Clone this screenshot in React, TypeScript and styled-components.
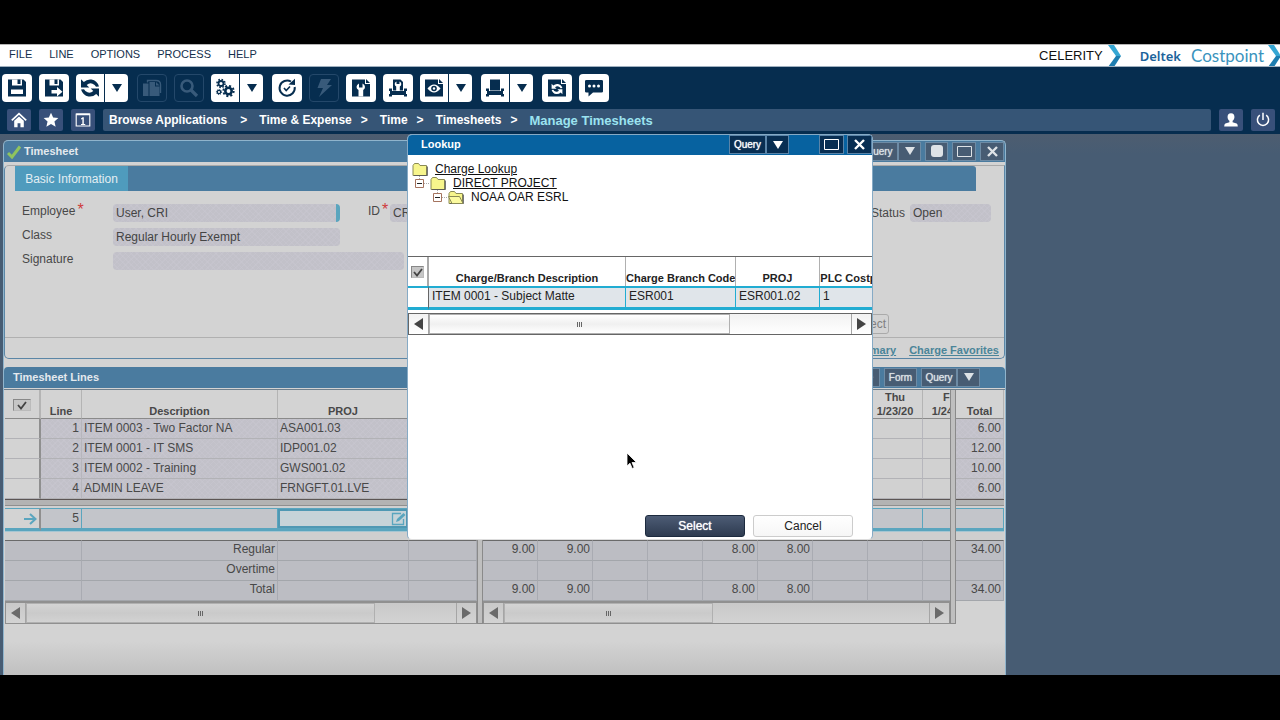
import React from 'react';
import styled, { createGlobalStyle, css } from 'styled-components';

const GlobalStyle = createGlobalStyle`
  * { box-sizing: border-box; }
  body { margin: 0; background: #000; font-family: "Liberation Sans", Arial, sans-serif; font-size: 12px; }
  button, input { font-family: inherit; font-size: inherit; }
  svg { display: block; flex: none; }
`;

const navy = '#062d4f';
const steel = '#4a7b9f';
const slate = '#475c73';
const cyan = '#5aa5be';

/* ---------- shell ---------- */

const Page = styled.div`
  display: flex;
  flex-direction: column;
  min-height: 100vh;
  padding: 44px 0 45px;
  background: #000;
`;

const MenuBar = styled.header`
  display: flex;
  justify-content: space-between;
  align-items: stretch;
  height: 23px;
  overflow: hidden;
  background: #fff;
  border-top: 1px solid #b5b5b5;
  border-bottom: 1px solid #9fb0bf;
`;

const Menus = styled.nav`
  display: flex;
  gap: 17px;
  padding-left: 9px;
  line-height: 18px;
  font-size: 11px;
  a { color: #14304c; text-decoration: none; }
`;

const Brand = styled.div`
  display: flex;
  align-items: center;
  margin-right: -2px;
  line-height: 20px;
`;

const Company = styled.span`
  margin-right: 5px;
  font-size: 13px;
  color: #111;
`;

const Vendor = styled.span`
  margin-left: 18px;
  margin-right: 10px;
  font-family: "Noto Sans", sans-serif;
  font-size: 13px;
  font-weight: 600;
  color: #1c639b;
`;

const Product = styled.span`
  margin-right: 4px;
  font-family: Lato, sans-serif;
  font-size: 17px;
  font-weight: 400;
  color: #3a93bd;
`;

const Header = styled.div`
  background: ${navy};
  padding: 7px 0 3px;
`;

const Toolbar = styled.div`
  display: flex;
  gap: 7px;
  padding-left: 2px;
  height: 28px;
`;

const ToolButton = styled.button`
  display: flex;
  align-items: center;
  justify-content: center;
  width: 30px;
  height: 28px;
  padding: 0;
  border: 0;
  border-radius: 4px;
  color: ${navy};
  background: #fff;
  &:disabled { color: #385a7a; background: none; border: 1px solid #24486a; }
`;

const SplitButton = styled.div`
  display: flex;
  margin-right: 2px;
  ${ToolButton}:first-child { width: 28px; border-radius: 4px 0 0 4px; }
  ${ToolButton}:last-child { width: 24px; border-radius: 0 4px 4px 0; border-left: 1px solid ${navy}; }
`;

const NavRow = styled.div`
  display: flex;
  gap: 8px;
  margin-top: 7px;
  padding: 0 5px 0 7px;
`;

const NavButton = styled.button`
  display: flex;
  align-items: center;
  justify-content: center;
  width: 24px;
  height: 22px;
  padding: 0;
  border: 0;
  border-radius: 2px;
  color: #fff;
  background: #38507a;
`;

const Crumbs = styled.nav`
  display: flex;
  flex: 1;
  align-items: center;
  padding-left: 6px;
  border-radius: 2px;
  background: #365576;
  font-weight: bold;
  color: #fff;
  a { color: inherit; text-decoration: none; }
  span { padding: 0 12px 0 9px; }
  a:first-child { padding-right: 4px; }
  a:last-child { color: #9be3f0; font-size: 13px; }
`;

/* ---------- workspace ---------- */

const Workspace = styled.main`
  position: relative;
  display: flex;
  flex: 1;
  padding: 6px 274px 0 3px;
  background: linear-gradient(#4d5d70, ${slate} 20px);
`;

const Window = styled.section`
  display: flex;
  flex-direction: column;
  flex: 1;
  min-width: 0;
  border: 1px solid #8fb4cc;
  border-bottom: 0;
  border-radius: 5px 5px 0 0;
  overflow: hidden;
  background: linear-gradient(#d3d3d3 0 500px, #c0c0c0 534px);
`;

const TitleBar = styled.div<{ $pad: number }>`
  display: flex;
  align-items: center;
  height: 21px;
  padding: 0 ${p => p.$pad}px 0 3px;
  background: ${steel};
  color: #e4e9ee;
  font-size: 11px;
`;

const Title = styled.h2<{ $indent: number }>`
  flex: 1;
  margin: 0;
  padding: 0 0 2px ${p => p.$indent}px;
  font-size: 11px;
  font-weight: bold;
`;

const BarButton = styled.button<{ $w: number; $gap?: number; $dark?: boolean }>`
  display: flex;
  align-items: center;
  justify-content: center;
  width: ${p => p.$w}px;
  height: 19px;
  margin-left: ${p => p.$gap || 0}px;
  margin-bottom: 1px;
  padding: 0;
  border: 1px solid ${p => (p.$dark ? '#5a84a8' : '#6d8ba5')};
  background: ${p => (p.$dark ? '#082e52' : slate)};
  color: ${p => (p.$dark ? '#fff' : '#dde2e6')};
  font-size: 10px;
  text-shadow: 0 0 1px currentColor;
`;

const FormPanel = styled.div`
  margin-top: 3px;
  border: 1px solid #5b86a6;
  border-top-color: #a9a9a9;
  border-radius: 5px;
  border-top-right-radius: 0;
`;

const TabStrip = styled.div`
  margin: 0 28px 0 10px;
  background: ${steel};
  border-radius: 0 3px 0 0;
`;

const Tab = styled.button`
  display: block;
  height: 25px;
  width: 113px;
  padding: 1px 0 0;
  border: 0;
  background: #4f9bbd;
  color: #e2eef3;
`;

const FormRows = styled.div`
  display: flex;
  flex-direction: column;
  padding: 8px 13px 0 17px;
  color: #484848;
`;

const FormRow = styled.div`
  display: flex;
  height: 24px;
`;

const Label = styled.label<{ $w: number; $end?: boolean }>`
  display: flex;
  width: ${p => p.$w}px;
  line-height: 24px;
  ${p => p.$end && css`margin-left: auto; padding-top: 2px;`}
`;

const IdText = styled.span`
  padding-left: 28px;
`;

const Required = styled.sup`
  margin-left: 2px;
  color: #cf3b3b;
  font-size: 16px;
  line-height: 22px;
`;

const hatch = css`
  background:
    repeating-linear-gradient(45deg, #cac8d266 0 1px, transparent 1px 4px),
    repeating-linear-gradient(-45deg, #cac8d266 0 1px, transparent 1px 4px),
    #c2c1c9;
`;

const Field = styled.input<{ $w: number; $mark?: boolean }>`
  ${hatch}
  width: ${p => p.$w}px;
  height: 18px;
  margin-top: 5px;
  padding: 0 3px;
  border: 0;
  border-right: ${p => (p.$mark ? `4px solid ${cyan}` : 0)};
  border-radius: 4px;
  color: #444;
`;

const SmallButton = styled.button`
  align-self: flex-end;
  margin: 43px 102px 3px 0;
  height: 20px;
  width: 48px;
  padding: 0 2px;
  text-align: right;
  border: 1px solid #aaa;
  border-radius: 3px;
  background: #d3d3d3;
  color: #808080;
`;

const PanelLinks = styled.div`
  display: flex;
  justify-content: flex-end;
  gap: 13px;
  height: 21px;
  padding: 4px 5px 0;
  border-top: 1px solid #b0b0b0;
  font-size: 11px;
  font-weight: bold;
  line-height: 16px;
  a { color: #4b8599; }
`;

const LinesBar = styled(TitleBar)`
  margin-top: 8px;
  border-radius: 4px 4px 0 0;
`;

/* ---------- line grid ---------- */

const Panes = styled.div`
  display: flex;
  align-items: flex-start;
  margin-top: 1px;
  padding: 0 1px;
  border-top: 1px solid #6f7f8c;
  color: #484848;
`;

const Pane = styled.div<{ $w?: number }>`
  ${p => (p.$w ? css`width: ${p.$w}px; flex: none;` : css`flex: 1; min-width: 0;`)}
  overflow: hidden;
`;

const Divider = styled.div`
  flex: none;
  width: 6px;
  height: 234px;
  border: 1px solid #8a8a8a;
  border-top: 0;
  background: #bfbfbf;
`;

const Grid = styled.table`
  table-layout: fixed;
  width: 100%;
  border-collapse: separate;
  border-spacing: 0;
  th, td { padding: 0 2px; overflow: hidden; white-space: nowrap; }
`;

const WideGrid = styled(Grid)`
  width: 495px;
`;

const HeadRow = styled.tr`
  height: 29px;
  th {
    vertical-align: bottom;
    font-size: 11px;
    line-height: 14px;
    border-right: 1px solid #b4b4b4;
    border-bottom: 1px solid #8a8a8a;
  }
  th.check { padding-bottom: 5px; border-right-width: 2px; }
`;

const Row = styled.tr<{ $plain?: boolean }>`
  height: 20px;
  td {
    ${p => (p.$plain ? 'background: #d1d1d1;' : hatch)}
    border-right: 1px solid #b6b6bc;
    border-bottom: 1px solid #b2b2b6;
    line-height: 19px;
  }
  td.mark { background: #d3d3d3; border-right: 2px solid #8f8f8f; }
`;

const GapRow = styled.tr<{ $split?: boolean }>`
  height: 9px;
  td {
    background: ${p =>
      p.$split
        ? 'linear-gradient(#5c5554 0 1px, #b3b3b3 1px 6px, #8f8f8f 6px 7px, #d0d0d0 7px)'
        : 'linear-gradient(#a5c6d2 0 1px, #cfcfcf 1px)'};
  }
`;

const CurrentRow = styled.tr`
  height: 23px;
  td {
    background: #c3c5ca;
    border-top: 1px solid ${cyan};
    border-bottom: 3px solid ${cyan};
    border-right: 1px solid ${cyan};
    line-height: 19px;
  }
  td.mark { background: #d3d3d3; border-right: 2px solid #8f8f8f; }
  td.edit { padding: 0; }
`;

const TotalRow = styled.tr<{ $first?: boolean }>`
  height: ${p => (p.$first ? 21 : 20)}px;
  td {
    background: #bcbdc3;
    border-right: 1px solid #a9abb2;
    border-bottom: 1px solid #a3a6ab;
    ${p => p.$first && 'border-top: 1px solid #6a6a6a;'}
    line-height: 17px;
    vertical-align: top;
    text-align: right;
  }
`;

const Num = styled.td`
  text-align: right;
`;

const CellEditor = styled.div`
  display: flex;
  align-items: center;
  height: 19px;
  border: 2px solid #4f98b3;
  background: #c6d3d8;
  input { flex: 1; min-width: 0; height: 15px; border: 0; padding: 0 2px; background: none; }
`;

const CheckBox = styled.span<{ $w: number }>`
  display: inline-grid;
  place-items: center;
  width: ${p => p.$w}px;
  height: 12px;
  border: 1px solid #888;
  border-right-color: #bbb;
  border-bottom-color: #bbb;
  background: #c6c6c6;
  input, svg { grid-area: 1 / 1; }
  input { appearance: none; margin: 0; width: 10px; height: 10px; }
  svg { pointer-events: none; }
`;

const ScrollTrack = styled.div<{ $light?: boolean }>`
  display: flex;
  height: ${p => (p.$light ? 22 : 23)}px;
  border: 1px solid ${p => (p.$light ? '#666' : '#909090')};
  border-top-width: ${p => (p.$light ? 1 : 2)}px;
  background: ${p => (p.$light ? 'linear-gradient(#f2f2f2, #fff)' : 'linear-gradient(#c9c9c9, #d3d3d3)')};
  color: ${p => (p.$light ? '#444' : '#6a6a6a')};
`;

const ScrollArrow = styled.button`
  display: flex;
  align-items: center;
  justify-content: center;
  flex: none;
  width: 20px;
  padding: 0;
  border: 0;
  color: inherit;
  background: none;
  border-right: 1px solid #a5a5a5;
  &:last-child { margin-left: auto; border-right: 0; border-left: 1px solid #a5a5a5; }
`;

const ScrollThumb = styled.div<{ $w: number; $light?: boolean }>`
  display: flex;
  align-items: center;
  justify-content: center;
  width: ${p => p.$w}px;
  border: 1px solid #b0b0b0;
  background: ${p => (p.$light ? 'linear-gradient(#fff, #f0f0f0 50%, #fff)' : 'linear-gradient(#d4d4d4, #cacaca 50%, #d2d2d2)')};
`;

/* ---------- lookup dialog ---------- */

const Dialog = styled.section`
  position: absolute;
  top: 0;
  left: 407px;
  display: flex;
  flex-direction: column;
  width: 466px;
  height: 406px;
  border: 1px solid #86aac5;
  border-bottom-color: #ddd;
  border-radius: 5px;
  overflow: hidden;
  background: #fff;
  color: #222;
`;

const DialogBar = styled.div`
  display: flex;
  align-items: center;
  flex: none;
  height: 20px;
  background: #0762a0;
  color: #fff;
`;

const Tree = styled.div`
  height: 101px;
  padding: 7px 0 0 4px;
`;

const TreeRow = styled.div<{ $depth: number }>`
  display: flex;
  align-items: center;
  height: 14px;
  padding-left: ${p => p.$depth * 18}px;
  color: #111;
  a, span { margin-left: 7px; color: inherit; line-height: 14px; }
`;

const LookupGrid = styled(Grid)`
  width: 490px;
  border-top: 1px solid #666;
  th {
    height: 29px;
    padding: 0 0 2px;
    vertical-align: bottom;
    font-size: 11px;
    line-height: 12px;
    border-right: 1px solid #b0b0b0;
  }
  td {
    height: 24px;
    padding: 0 3px 2px;
    background: #e0e5ea;
    border-top: 2px solid #21acd2;
    border-bottom: 3px solid #21acd2;
    border-right: 1px solid #21acd2;
    line-height: 17px;
  }
  th:first-child { padding-bottom: 7px; border-right: 2px solid #aaa; }
  td:first-child { background: #fff; border-right-color: #666; }
`;

const LookupScroll = styled.div`
  padding-top: 3px;
`;

const Actions = styled.div`
  display: flex;
  justify-content: flex-end;
  gap: 8px;
  margin-top: auto;
  padding: 0 19px 2px 0;
`;

const ActionButton = styled.button<{ $primary?: boolean }>`
  width: 100px;
  height: 22px;
  padding: 0;
  border-radius: 3px;
  border: 1px solid ${p => (p.$primary ? '#1c2a3e' : '#ccc')};
  background: ${p => (p.$primary ? 'linear-gradient(#4d5c75, #2e3b50)' : 'linear-gradient(#fff, #f6f6f6)')};
  color: ${p => (p.$primary ? '#fff' : '#222')};
  ${p => p.$primary && css`text-shadow: 0 0 1px #fff;`}
`;

const Pointer = styled.svg`
  position: absolute;
  left: 626px;
  top: 318px;
`;

/* ---------- icons ---------- */

const Ic = ({ children, size = 20 }: { children: React.ReactNode; size?: number }) => (
  <svg width={size} height={size} viewBox="0 0 20 20" fill="currentColor" aria-hidden="true">{children}</svg>
);

const Down = () => (
  <svg width="10" height="8" viewBox="0 0 10 8" fill="currentColor" aria-hidden="true"><path d="M0 0h10L5 8z" /></svg>
);

const SyncShape = () => (
  <>
    <path d="M1 1.200v8.300h8.300L6.700 6.900Q9.500 4.600 12.500 5.700 15 6.600 16 8.800l3-.3Q17 2.500 11.500 1.600 7 1 3.800 4z" />
    <path d="M19 18.800v-8.300h-8.300l2.600 2.600Q10.500 15.400 7.500 14.300 5 13.400 4 11.200l-3 .3Q3 17.500 8.500 18.400 13 19 16.200 16z" />
  </>
);

const SaveIcon = () => (
  <Ic>
    <path d="M1 1.500h15.500L19 4v14.500H1z" />
    <path d="M5 1.500h10v6H5zM4 11.500h12V16H4z" fill="#fff" />
    <path d="M10.500 1.500h3v4.500h-3z" />
  </Ic>
);
const SaveNextIcon = () => (
  <Ic>
    <path d="M1 1.500h15.500L19 4v14.500H1z" />
    <path d="M5.500 1.500h9.500v6H5.500z" fill="#fff" />
    <path d="M10.500 1.500h3v4.500h-3z" />
    <path d="M7.500 12H13V9l5.500 4.800L13 18.500v-3H7.500z" fill="#fff" />
  </Ic>
);
const SyncIcon = () => <Ic><SyncShape /></Ic>;
const CopyIcon = () => (
  <Ic>
    <path d="M1 5.500h5.500V18H1z" />
    <path d="M7.500 4h5.500v4.500h4.500V18H7.500z" />
    <path d="M14 4l3.500 3.500H14z" />
    <path d="M5.500 4.500V2.500H14q4.500 0 4.500 4V15" fill="none" stroke="currentColor" strokeWidth="1.400" />
  </Ic>
);
const SearchIcon = () => (
  <Ic>
    <circle cx="8" cy="8" r="5.500" fill="none" stroke="currentColor" strokeWidth="2.600" />
    <path d="M12 12l6 6" stroke="currentColor" strokeWidth="3.200" />
  </Ic>
);
const GearsIcon = () => (
  <Ic>
    <g fill="none" stroke="currentColor">
      <circle cx="6" cy="5.500" r="2.500" strokeWidth="1.800" />
      <circle cx="6" cy="5.500" r="4" strokeWidth="1.600" strokeDasharray="1.570 1.570" />
      <circle cx="13.500" cy="13" r="3.200" strokeWidth="2.600" />
      <circle cx="13.500" cy="13" r="5.200" strokeWidth="1.900" strokeDasharray="2.040 2.040" />
      <circle cx="4" cy="14" r="1.700" strokeWidth="1.300" />
      <circle cx="4" cy="14" r="2.600" strokeWidth="1" strokeDasharray="1.020 1.020" />
    </g>
  </Ic>
);
const ClockCheckIcon = () => (
  <Ic>
    <path d="M14 3.500A7.600 7.600 0 1 0 17.700 9" fill="none" stroke="currentColor" strokeWidth="2" />
    <path d="M11.500 6.500L18 7V.800z" />
    <path d="M7 10l2.200 2.600L13 8.500" fill="none" stroke="currentColor" strokeWidth="1.600" />
  </Ic>
);
const BoltIcon = () => <Ic><path d="M7 1h10l-4 6h5L5 19l4-9H3.500z" /></Ic>;
const PageIcon = ({ children }: { children: React.ReactNode }) => (
  <Ic>
    <path d="M1 1.500h13v4.500h5v12.500H1z" />
    <path d="M15 1l4 4h-4z" />
    {children}
  </Ic>
);
const Wrench = () => (
  <path d="M8 5.500v4h3.500v-4q2.500 1 2.500 3.500 0 2-1.800 3v6.500H7.500V12Q5.500 11 5.500 9 5.500 6.500 8 5.500z" fill="#fff" />
);
const PrinterBase = () => (
  <path fillRule="evenodd" d="M1 10.500h3V13h12v-2.500h3V13h-1v3h1v2.500h-3V17H4v1.500H1V16h1v-3H1z" />
);
const PrinterToolIcon = () => (
  <Ic>
    <path d="M5 1.500h7.500L15 4v8.500H5z" /><PrinterBase />
    <path d="M8.500 3.500V6h3V3.500q1.800.800 1.800 2.500 0 1.600-1.500 2.400V13H8.200V8.400Q6.700 7.600 6.700 6q0-1.700 1.800-2.500z" fill="#fff" />
  </Ic>
);
const PrinterIcon = () => <Ic><path d="M5 1.500h10v11H5z" /><PrinterBase /></Ic>;
const EyeShape = () => (
  <>
    <path d="M3.500 10.500q6.500-8 13 0-6.500 8-13 0z" fill="#fff" />
    <circle cx="10" cy="10.500" r="2.800" />
    <circle cx="10" cy="10.500" r="1.200" fill="#fff" />
  </>
);
const ChatIcon = () => (
  <Ic>
    <path d="M2.500 2h15q1.500 0 1.500 1v10.500q0 1-1.500 1H9L4.500 18.500v-4h-2q-1.500 0-1.500-1V3q0-1 1.500-1z" />
    <g fill="#fff"><circle cx="5.500" cy="8" r="1.500" /><circle cx="10" cy="8" r="1.500" /><circle cx="14.500" cy="8" r="1.500" /></g>
  </Ic>
);
const HomeIcon = () => (
  <Ic size={16}>
    <path d="M1 10.500L10 2l9 8.500" fill="none" stroke="currentColor" strokeWidth="2.200" />
    <path d="M4 11l6-5.500 6 5.500v8h-4.200v-5H8.200v5H4z" />
  </Ic>
);
const StarIcon = () => <Ic size={16}><path d="M10 1l2.700 6 6.500.600-4.900 4.300 1.500 6.500L10 15l-5.800 3.400 1.500-6.500L.800 7.600 7.300 7z" /></Ic>;
const OneIcon = () => (
  <Ic size={16}>
    <path d="M1.500 2.500h17v15h-17z" fill="none" stroke="currentColor" strokeWidth="1.400" />
    <path d="M1.500 2h17v2h-17zM9.500 6.500H11V15h1.800v1.300H7.500V15h1.700V8.700L7.500 9.300V8z" />
  </Ic>
);
const UserIcon = () => <Ic size={16}><path d="M10 1.500c3 0 4.300 2 4.300 4.600 0 2-1 3.900-2.300 4.900v1.800l5 1.700q1.500.800 1.500 3.500h-17q0-2.700 1.500-3.500l5-1.700V11C6.700 10 5.700 8.100 5.700 6.100 5.700 3.500 7 1.500 10 1.500z" /></Ic>;
const PowerIcon = () => (
  <Ic size={16}><path d="M6 4a7 7 0 1 0 8 0M10 1v9" fill="none" stroke="currentColor" strokeWidth="1.900" /></Ic>
);
const Chevron = () => (
  <svg width="14" height="22" viewBox="0 0 14 22" aria-hidden="true">
    <path d="M0 0h6l7 11H8z" fill="#35a6d3" /><path d="M8 11h5L6 22H0z" fill="#1d7db0" />
  </svg>
);
const MaxIcon = () => <svg width="15" height="11" aria-hidden="true"><path d="M.5.5h14v10H.5z" fill="none" stroke="currentColor" /></svg>;
const CloseIcon = () => <svg width="11" height="11" aria-hidden="true"><path d="M1 1l9 9M10 1l-9 9" stroke="currentColor" strokeWidth="2.400" /></svg>;
const DotIcon = () => <svg width="12" height="12" aria-hidden="true"><rect width="12" height="12" rx="3" fill="currentColor" /></svg>;
const OkIcon = () => <svg width="15" height="14" viewBox="0 0 15 14" aria-hidden="true"><path d="M1 8l4 4L13 1.500" fill="none" stroke="#8fc45e" strokeWidth="3" /></svg>;
const TickIcon = () => <svg width="10" height="9" viewBox="0 0 10 9" aria-hidden="true"><path d="M1 4l3 3.500L9 1" fill="none" stroke="#444" strokeWidth="1.800" /></svg>;
const ArrowIcon = () => <svg width="13" height="12" viewBox="0 0 13 12" aria-hidden="true"><path d="M0 6h11M6 1l5.500 5L6 11" fill="none" stroke={cyan} strokeWidth="2" /></svg>;
const EditIcon = () => (
  <svg width="15" height="14" viewBox="0 0 15 14" aria-hidden="true">
    <path d="M10 1.500H1.500v11h11V7" fill="none" stroke={cyan} strokeWidth="1.300" />
    <path d="M5 10l1-3 6.500-6L14.500 3 8 9z" fill={cyan} />
  </svg>
);
const Grip = () => <svg width="6" height="5" aria-hidden="true"><path d="M.5 0v5M2.500 0v5M4.500 0v5" stroke="#666" strokeWidth="1" /></svg>;
const Side = ({ left }: { left?: boolean }) => (
  <svg width="9" height="12" viewBox="0 0 9 12" fill="currentColor" aria-hidden="true"><path d={left ? 'M9 0v12L0 6z' : 'M0 0v12l9-6z'} /></svg>
);
const Folder = ({ open }: { open?: boolean }) => (
  <svg width="16" height="13" viewBox="0 0 16 13" aria-hidden="true">
    <path d="M1 2.500L2.500.500h4L8 2.500h6.500v10H1z" fill="#f7f58c" stroke="#8a8a55" />
    <path d="M15.300 3.500v9.200H2" fill="none" stroke="#555" />
    {open && <path d="M.500 5.500h11l3.500 7H4z" fill="#fbfa9f" stroke="#8a8a55" />}
  </svg>
);
const Minus = () => (
  <svg width="18" height="14" viewBox="0 0 18 14" aria-hidden="true">
    <path d="M3.500 3.500h8v8h-8z" fill="#fff" stroke="#a5745f" />
    <path d="M5 7.500h5" stroke="#222" /><path d="M12 7.500h6M7.500 0v3" stroke="#aaa" strokeDasharray="1 1" />
  </svg>
);

/* ---------- pieces ---------- */

const Tool = ({ name, icon, menu, disabled }: { name: string; icon: React.ReactNode; menu?: boolean; disabled?: boolean }) =>
  menu ? (
    <SplitButton>
      <ToolButton aria-label={name}>{icon}</ToolButton>
      <ToolButton aria-label={`${name} menu`}><Down /></ToolButton>
    </SplitButton>
  ) : (
    <ToolButton aria-label={name} disabled={disabled}>{icon}</ToolButton>
  );

const Scrollbar = ({ thumb, light }: { thumb: number; light?: boolean }) => (
  <ScrollTrack $light={light}>
    <ScrollArrow aria-label="Scroll left"><Side left /></ScrollArrow>
    <ScrollThumb $w={thumb} $light={light}><Grip /></ScrollThumb>
    <ScrollArrow aria-label="Scroll right"><Side /></ScrollArrow>
  </ScrollTrack>
);

const SelectAll = ({ width }: { width: number }) => (
  <CheckBox $w={width}><input type="checkbox" aria-label="Select all rows" /><TickIcon /></CheckBox>
);

const ArrowSlot = styled.span`
  display: flex;
  justify-content: flex-end;
`;

const lines = [
  { n: 1, text: 'ITEM 0003 - Two Factor NA', proj: 'ASA001.03', total: '6.00' },
  { n: 2, text: 'ITEM 0001 - IT SMS', proj: 'IDP001.02', total: '12.00' },
  { n: 3, text: 'ITEM 0002 - Training', proj: 'GWS001.02', total: '10.00' },
  { n: 4, text: 'ADMIN LEAVE', proj: 'FRNGFT.01.LVE', total: '6.00' },
];
const dayTotals = ['9.00', '9.00', '', '', '8.00', '8.00', '', '', ''];
const sums = [
  { name: 'Regular', days: dayTotals, total: '34.00' },
  { name: 'Overtime', days: dayTotals.map(() => ''), total: '' },
  { name: 'Total', days: dayTotals, total: '34.00' },
];

const LeftPane = () => (
  <Pane $w={472}>
    <Grid>
      <colgroup><col width="36" /><col width="41" /><col width="196" /><col width="131" /><col width="68" /></colgroup>
      <thead>
        <HeadRow><th className="check"><SelectAll width={18} /></th><th>Line</th><th>Description</th><th>PROJ</th><th /></HeadRow>
      </thead>
      <tbody>
        {lines.map(l => (
          <Row key={l.n}><td className="mark" /><Num>{l.n}</Num><td>{l.text}</td><td>{l.proj}</td><td /></Row>
        ))}
        <GapRow $split><td colSpan={5} /></GapRow>
        <CurrentRow>
          <td className="mark"><ArrowSlot><ArrowIcon /></ArrowSlot></td><Num>5</Num><td />
          <td className="edit"><CellEditor><input aria-label="PROJ" /><EditIcon /></CellEditor></td><td />
        </CurrentRow>
        <GapRow><td colSpan={5} /></GapRow>
        {sums.map((s, i) => (
          <TotalRow key={s.name} $first={i === 0}><td colSpan={2} /><td>{s.name}</td><td /><td /></TotalRow>
        ))}
      </tbody>
    </Grid>
    <Scrollbar thumb={349} />
  </Pane>
);

const DayPane = () => (
  <Pane>
    <WideGrid>
      <thead>
        <HeadRow>
          {dayTotals.map((_, i) => (
            <th key={i}>{i === 7 ? <>Thu<br />1/23/20</> : i === 8 ? <>Fri<br />1/24/20</> : null}</th>
          ))}
        </HeadRow>
      </thead>
      <tbody>
        {lines.map(l => <Row key={l.n} $plain>{dayTotals.map((_, i) => <td key={i} />)}</Row>)}
        <GapRow $split><td colSpan={9} /></GapRow>
        <CurrentRow>{dayTotals.map((_, i) => <td key={i} />)}</CurrentRow>
        <GapRow><td colSpan={9} /></GapRow>
        {sums.map((s, r) => (
          <TotalRow key={s.name} $first={r === 0}>{s.days.map((d, i) => <td key={i}>{d}</td>)}</TotalRow>
        ))}
      </tbody>
    </WideGrid>
    <Scrollbar thumb={209} />
  </Pane>
);

const TotalPane = () => (
  <Pane $w={48}>
    <Grid>
      <thead><HeadRow><th>Total</th></HeadRow></thead>
      <tbody>
        {lines.map(l => <Row key={l.n}><Num>{l.total}</Num></Row>)}
        <GapRow $split><td /></GapRow>
        <CurrentRow><td /></CurrentRow>
        <GapRow><td /></GapRow>
        {sums.map((s, i) => <TotalRow key={s.name} $first={i === 0}><td>{s.total}</td></TotalRow>)}
      </tbody>
    </Grid>
  </Pane>
);

const LookupDialog = () => (
  <Dialog role="dialog" aria-label="Lookup">
    <DialogBar>
      <Title $indent={13}>Lookup</Title>
      <BarButton $dark $w={37}>Query</BarButton>
      <BarButton $dark $w={23} aria-label="Query menu"><Down /></BarButton>
      <BarButton $dark $w={25} $gap={30} aria-label="Maximize"><MaxIcon /></BarButton>
      <BarButton $dark $w={25} $gap={3} aria-label="Close"><CloseIcon /></BarButton>
    </DialogBar>
    <Tree>
      <TreeRow $depth={0}><Folder /><a href="#charge">Charge Lookup</a></TreeRow>
      <TreeRow $depth={0}><Minus /><Folder /><a href="#direct">DIRECT PROJECT</a></TreeRow>
      <TreeRow $depth={1}><Minus /><Folder open /><span>NOAA OAR ESRL</span></TreeRow>
    </Tree>
    <LookupGrid>
      <colgroup><col width="21" /><col width="197" /><col width="110" /><col width="84" /><col width="78" /></colgroup>
      <thead>
        <tr>
          <th><SelectAll width={13} /></th><th>Charge/Branch Description</th><th>Charge Branch Code</th>
          <th>PROJ</th><th>PLC Costpoint</th>
        </tr>
      </thead>
      <tbody>
        <tr><td /><td>ITEM 0001 - Subject Matte</td><td>ESR001</td><td>ESR001.02</td><td>1</td></tr>
      </tbody>
    </LookupGrid>
    <LookupScroll><Scrollbar thumb={301} light /></LookupScroll>
    <Actions>
      <ActionButton $primary>Select</ActionButton>
      <ActionButton>Cancel</ActionButton>
    </Actions>
  </Dialog>
);

export default function App() {
  return (
    <Page>
      <GlobalStyle />
      <MenuBar>
        <Menus>
          {['FILE', 'LINE', 'OPTIONS', 'PROCESS', 'HELP'].map(m => <a key={m} href={`#${m}`}>{m}</a>)}
        </Menus>
        <Brand>
          <Company>CELERITY</Company><Chevron />
          <Vendor>Deltek</Vendor><Product>Costpoint</Product><Chevron />
        </Brand>
      </MenuBar>
      <Header>
        <Toolbar>
          <Tool name="Save" icon={<SaveIcon />} />
          <Tool name="Save and continue" icon={<SaveNextIcon />} />
          <Tool name="Refresh" icon={<SyncIcon />} menu />
          <Tool name="Copy" icon={<CopyIcon />} disabled />
          <Tool name="Find" icon={<SearchIcon />} disabled />
          <Tool name="Process" icon={<GearsIcon />} menu />
          <Tool name="Check status" icon={<ClockCheckIcon />} />
          <Tool name="Quick action" icon={<BoltIcon />} disabled />
          <Tool name="Report options" icon={<PageIcon><Wrench /></PageIcon>} />
          <Tool name="Print options" icon={<PrinterToolIcon />} />
          <Tool name="Preview" icon={<PageIcon><EyeShape /></PageIcon>} menu />
          <Tool name="Print" icon={<PrinterIcon />} menu />
          <Tool
            name="Reload report"
            icon={<PageIcon><g fill="#fff" transform="translate(4 5) scale(.6)"><SyncShape /></g></PageIcon>}
          />
          <Tool name="Messages" icon={<ChatIcon />} />
        </Toolbar>
        <NavRow>
          <NavButton aria-label="Home"><HomeIcon /></NavButton>
          <NavButton aria-label="Favorites"><StarIcon /></NavButton>
          <NavButton aria-label="Open applications"><OneIcon /></NavButton>
          <Crumbs>
            <a href="#apps">Browse Applications</a><span>&gt;</span>
            <a href="#te">Time &amp; Expense</a><span>&gt;</span>
            <a href="#time">Time</a><span>&gt;</span>
            <a href="#sheets">Timesheets</a><span>&gt;</span>
            <a href="#manage">Manage Timesheets</a>
          </Crumbs>
          <NavButton aria-label="User"><UserIcon /></NavButton>
          <NavButton aria-label="Log out"><PowerIcon /></NavButton>
        </NavRow>
      </Header>
      <Workspace>
        <Window>
          <TitleBar $pad={1}>
            <OkIcon />
            <Title $indent={2}>Timesheet</Title>
            <BarButton $w={38}>Query</BarButton>
            <BarButton $w={23} aria-label="Query menu"><Down /></BarButton>
            <BarButton $w={23} $gap={4} aria-label="Dock"><DotIcon /></BarButton>
            <BarButton $w={24} $gap={4} aria-label="Maximize"><MaxIcon /></BarButton>
            <BarButton $w={24} $gap={4} aria-label="Close"><CloseIcon /></BarButton>
          </TitleBar>
          <FormPanel>
            <TabStrip><Tab>Basic Information</Tab></TabStrip>
            <FormRows>
              <FormRow>
                <Label htmlFor="employee" $w={91}>Employee<Required>*</Required></Label>
                <Field id="employee" $w={227} $mark readOnly defaultValue="User, CRI" />
                <Label htmlFor="empid" $w={50}><IdText>ID</IdText><Required>*</Required></Label>
                <Field id="empid" $w={80} readOnly defaultValue="CRI" />
                <Label htmlFor="status" $w={39} $end>Status</Label>
                <Field id="status" $w={81} readOnly defaultValue="Open" />
              </FormRow>
              <FormRow>
                <Label htmlFor="class" $w={91}>Class</Label>
                <Field id="class" $w={227} readOnly defaultValue="Regular Hourly Exempt" />
              </FormRow>
              <FormRow>
                <Label htmlFor="signature" $w={91}>Signature</Label>
                <Field id="signature" $w={291} readOnly />
              </FormRow>
              <SmallButton>Select</SmallButton>
            </FormRows>
            <PanelLinks><a href="#summary">Summary</a><a href="#favorites">Charge Favorites</a></PanelLinks>
          </FormPanel>
          <LinesBar $pad={25}>
            <Title $indent={6}>Timesheet Lines</Title>
            <BarButton $w={38}>Table</BarButton>
            <BarButton $w={33} $gap={4}>Form</BarButton>
            <BarButton $w={36} $gap={4}>Query</BarButton>
            <BarButton $w={23} aria-label="Query menu"><Down /></BarButton>
          </LinesBar>
          <Panes>
            <LeftPane />
            <Divider />
            <DayPane />
            <Divider />
            <TotalPane />
          </Panes>
        </Window>
        <LookupDialog />
        <Pointer width="12" height="18" viewBox="0 0 12 18" aria-hidden="true">
          <path d="M1 1v13l3-2.800L6.200 16.500l2-.9L6 10.500h4.500z" fill="#000" stroke="#fff" strokeWidth=".8" />
        </Pointer>
      </Workspace>
    </Page>
  );
}
